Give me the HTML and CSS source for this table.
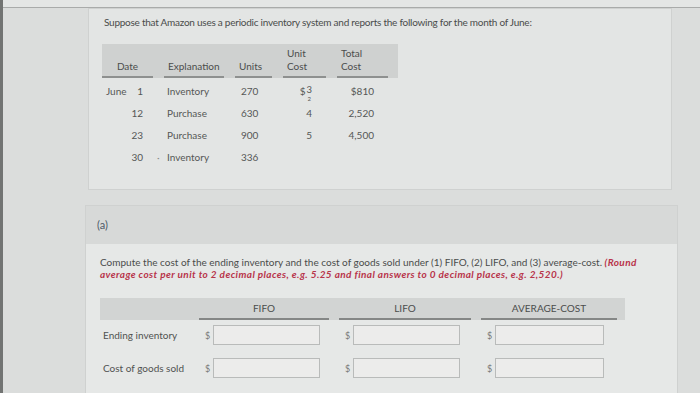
FILE: index.html
```html
<!DOCTYPE html>
<html>
<head>
<meta charset="utf-8">
<link rel="stylesheet" href="styles.css">
</head>
<body>
<div class="page">
  <div class="topbar"></div>
  <div class="main">
    <section class="panel panel-one">
      <p class="intro">Suppose that Amazon uses a periodic inventory system and reports the following for the month of June:</p>
      <div class="inv">
        <div class="inv-row inv-head">
          <div class="hc hc-date">Date</div>
          <div class="hc">Explanation</div>
          <div class="hc">Units</div>
          <div class="hc">Unit<br>Cost</div>
          <div class="hc">Total<br>Cost</div>
        </div>
        <div class="inv-row">
          <div class="c c-date"><span>June</span><span>1</span></div>
          <div class="c c-exp">Inventory</div>
          <div class="c c-units">270</div>
          <div class="c c-num c-glitch"><span>$</span><span class="glitch"><span class="top">3</span><span class="sub">2</span></span></div>
          <div class="c c-num">$810</div>
        </div>
        <div class="inv-row">
          <div class="c c-date"><span></span><span>12</span></div>
          <div class="c c-exp">Purchase</div>
          <div class="c c-units">630</div>
          <div class="c c-num">4</div>
          <div class="c c-num">2,520</div>
        </div>
        <div class="inv-row">
          <div class="c c-date"><span></span><span>23</span></div>
          <div class="c c-exp">Purchase</div>
          <div class="c c-units">900</div>
          <div class="c c-num">5</div>
          <div class="c c-num">4,500</div>
        </div>
        <div class="inv-row">
          <div class="c c-date"><span></span><span>30</span></div>
          <div class="c c-exp dotted">Inventory</div>
          <div class="c c-units">336</div>
          <div class="c c-num"></div>
          <div class="c c-num"></div>
        </div>
      </div>
    </section>

    <section class="panel panel-two">
      <div class="part-head">(a)</div>
      <div class="part-body">
        <p class="question">Compute the cost of the ending inventory and the cost of goods sold under (1) FIFO, (2) LIFO, and (3) average-cost. <em class="note">(Round</em><br><em class="note">average cost per unit to 2 decimal places, e.g. 5.25 and final answers to 0 decimal places, e.g. 2,520.)</em></p>
        <div class="ans">
          <div class="ans-row ans-head">
            <div class="ah ah-blank"></div>
            <div class="ah">FIFO</div>
            <div class="ah">LIFO</div>
            <div class="ah">AVERAGE-COST</div>
          </div>
          <div class="ans-row">
            <div class="lbl">Ending inventory</div>
            <div class="cell"><span class="cur">$</span><span class="box"></span></div>
            <div class="cell"><span class="cur">$</span><span class="box"></span></div>
            <div class="cell"><span class="cur">$</span><span class="box wide"></span></div>
          </div>
          <div class="ans-row ans-row2">
            <div class="lbl">Cost of goods sold</div>
            <div class="cell"><span class="cur">$</span><span class="box"></span></div>
            <div class="cell"><span class="cur">$</span><span class="box"></span></div>
            <div class="cell"><span class="cur">$</span><span class="box wide"></span></div>
          </div>
        </div>
      </div>
    </section>
  </div>
</div>
</body>
</html>
```

FILE: styles.css
```css
* { box-sizing: border-box; }
html, body {
  margin: 0;
  padding: 0;
  width: 700px;
  height: 393px;
  overflow: hidden;
  background: #dbdddc;
  font-family: Lato, "Open Sans", sans-serif;
  color: #505251;
}
.page {
  border-left: 3px solid #727473;
  height: 393px;
  display: flex;
  flex-direction: column;
  overflow: hidden;
}
.topbar {
  flex-shrink: 0;
  height: 8px;
  background: #e4e6e5;
  border-bottom: 1px solid #a9abaa;
}
.main {
  flex-shrink: 0;
  padding-left: 82px;
  display: flex;
  flex-direction: column;
  gap: 15px;
}
.panel {
  flex-shrink: 0;
  border: 1px solid #cfd1d0;
}
.panel-one {
  margin-left: 3px;
  width: 584px;
  height: 182px;
  background: #e3e5e4;
  padding: 7px 0 0 13px;
}
.intro {
  margin: 0 0 16px 2px;
  font-size: 10px;
  line-height: 12px;
  letter-spacing: -0.25px;
  color: #4a4c4b;
}
.inv { width: 296px; }
.inv-row {
  display: grid;
  grid-template-columns: 51px 60px 37px 43px 51px;
  column-gap: 11px;
  height: 22px;
  align-items: center;
  font-size: 10px;
}
.inv-head {
  height: 34px;
  background: #cfd1d0;
  align-items: end;
  margin-bottom: 2px;
}
.hc {
  border-bottom: 2px solid #8e908f;
  padding: 0 0 3px 4px;
  line-height: 13px;
  color: #4b4d4c;
}
.hc-date { text-align: center; padding-left: 0; }
.c { line-height: 12px; color: #555756; }
.c-date {
  display: flex;
  justify-content: space-between;
  padding: 0 10px 0 4px;
}
.c-exp { padding-left: 3px; position: relative; }
.dotted::before {
  content: "\00B7";
  position: absolute;
  left: -7px;
  color: #8a8c8b;
}
.c-units { padding-left: 6px; }
.c-num { text-align: right; padding-right: 14px; }
.c-glitch {
  display: flex;
  justify-content: flex-end;
  align-items: flex-start;
  height: 22px;
  padding-top: 5px;
}
.glitch {
  display: flex;
  flex-direction: column;
  align-items: center;
  margin-left: 1px;
}
.glitch .top { line-height: 11px; font-size: 9.5px; margin-top: -1px; }
.glitch .sub { line-height: 7px; font-size: 6px; }

.panel-two {
  width: 593px;
  height: 200px;
  background: #e6e8e7;
}
.part-head {
  height: 38px;
  background: #d7d9d8;
  padding: 12px 0 0 11px;
  font-size: 11px;
  line-height: 14px;
  color: #4e5a68;
}
.part-body {
  padding: 12px 0 0 14px;
}
.question {
  margin: 0;
  font-size: 10px;
  line-height: 12px;
  letter-spacing: 0;
  color: #4a4c4b;
  width: 560px;
}
.note {
  color: #b8344a;
  font-weight: bold;
  font-style: italic;
  letter-spacing: 0.4px;
}
.ans {
  margin-top: 18px;
  width: 525px;
}
.ans-row {
  display: grid;
  grid-template-columns: 89px 130px 132px 136px;
  column-gap: 10px;
  align-items: center;
  height: 20px;
  margin-top: 5px;
  font-size: 10px;
}
.ans-row2 { margin-top: 13px; }
.ans-head {
  margin-top: 0;
  height: 22px;
  background: #d2d4d3;
  align-items: stretch;
}
.ah {
  border-bottom: 2px solid #858786;
  text-align: center;
  line-height: 20px;
  color: #4b4d4c;
}
.ah-blank { border-bottom: none; }
.lbl {
  padding-left: 3px;
  color: #505251;
  white-space: nowrap;
}
.cell {
  display: flex;
  align-items: center;
  height: 20px;
}
.cur {
  padding-left: 6px;
  width: 14px;
  color: #777978;
  font-size: 9px;
}
.box {
  width: 107px;
  height: 20px;
  background: #ececeb;
  border: 1px solid #b9bbba;
}
.box.wide { width: 109px; }
```
